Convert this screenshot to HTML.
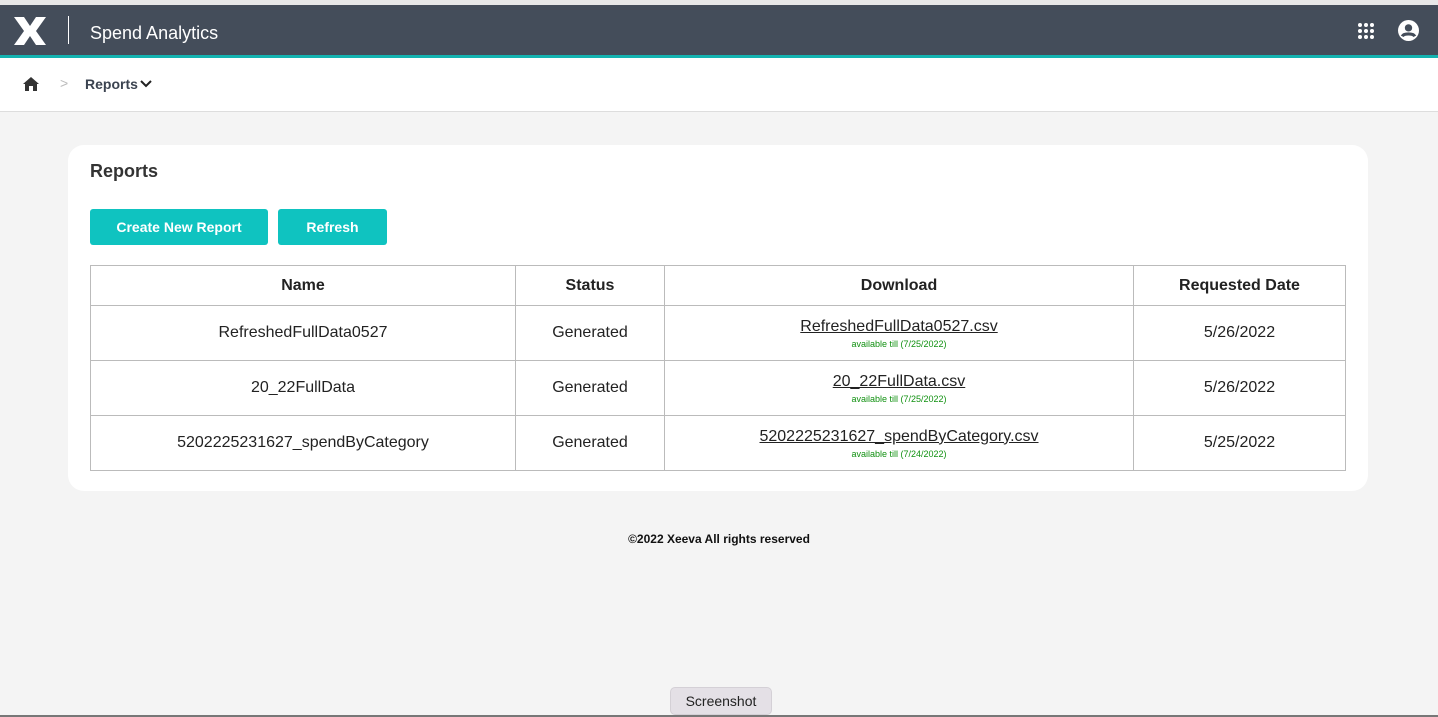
<!DOCTYPE html>
<html><head><style>
*{margin:0;padding:0;box-sizing:border-box}
body{width:1438px;height:717px;background:#f4f4f4;font-family:"Liberation Sans",Arial,sans-serif;position:relative;overflow:hidden}
.top{position:absolute;left:0;top:0;width:1438px;height:5px;background:#e8e8e8}
.hdr{position:absolute;left:0;top:5px;width:1438px;height:50px;background:#444d5a}
.teal{position:absolute;left:0;top:55px;width:1438px;height:3px;background:#14b3b0}
.bc{position:absolute;left:0;top:58px;width:1438px;height:54px;background:#fff;border-bottom:1px solid #ddd}
.card{position:absolute;left:68px;top:145px;width:1300px;height:346px;background:#fff;border-radius:16px}
.btn{position:absolute;top:209px;height:36px;background:#0fc3c0;color:#fff;font-weight:bold;font-size:14px;display:flex;align-items:center;justify-content:center;border-radius:3px}
table{position:absolute;left:90px;top:265px;width:1256px;border-collapse:collapse;font-size:16px;color:#222}
td,th{border:1px solid #bbb;text-align:center}
th{height:40px;font-weight:bold}
td{height:55px}
a{color:#222;text-decoration:underline}
.av{font-size:9px;color:#119111;margin-top:3px}
</style></head><body>
<div class="top"></div>
<div class="hdr">
<svg style="position:absolute;left:14px;top:12px" width="32" height="28" viewBox="0 0 32 28"><path d="M0 0h10l6 9 6-9h10l-10 14 10 14H22l-6-9-6 9H0l10-14z" fill="#fff"/></svg>
<div style="position:absolute;left:68px;top:11px;width:1px;height:28px;background:#fff"></div>
<div style="position:absolute;left:90px;top:18px;color:#fff;font-size:18px">Spend Analytics</div>
<svg style="position:absolute;left:1357px;top:17px" width="18" height="18" viewBox="0 0 18 18" fill="#fff"><circle cx="3" cy="3" r="2"/><circle cx="9" cy="3" r="2"/><circle cx="15" cy="3" r="2"/><circle cx="3" cy="9" r="2"/><circle cx="9" cy="9" r="2"/><circle cx="15" cy="9" r="2"/><circle cx="3" cy="15" r="2"/><circle cx="9" cy="15" r="2"/><circle cx="15" cy="15" r="2"/></svg>
<svg style="position:absolute;left:1398px;top:15px" width="21" height="21" viewBox="0 0 20 20"><circle cx="10" cy="10" r="10" fill="#fff"/><circle cx="10" cy="7.5" r="3.5" fill="#444d5a"/><path d="M4 15.5c1.5-3 10.5-3 12 0" stroke="#444d5a" stroke-width="3" fill="none"/></svg>
</div>
<div class="teal"></div>
<div class="bc">
<svg style="position:absolute;left:23px;top:19px" width="16" height="14" viewBox="0 0 16 14"><path d="M8 0L0 7h2v7h4V9h4v5h4V7h2z" fill="#333"/></svg>
<div style="position:absolute;left:60px;top:17px;color:#bbb;font-size:14px">&gt;</div>
<div style="position:absolute;left:85px;top:18px;color:#3b4350;font-size:14px;font-weight:bold">Reports</div>
<svg style="position:absolute;left:140px;top:22px" width="12" height="8" viewBox="0 0 12 8"><path d="M1 1l5 5 5-5" stroke="#222" stroke-width="2" fill="none"/></svg>
</div>
<div class="card"></div>
<div style="position:absolute;left:90px;top:161px;font-size:18px;font-weight:bold;color:#333">Reports</div>
<div class="btn" style="left:90px;width:178px">Create New Report</div>
<div class="btn" style="left:278px;width:109px">Refresh</div>
<table>
<tr><th style="width:425px">Name</th><th style="width:149px">Status</th><th style="width:469px">Download</th><th>Requested Date</th></tr>
<tr><td>RefreshedFullData0527</td><td>Generated</td><td><a>RefreshedFullData0527.csv</a><div class="av">available till (7/25/2022)</div></td><td>5/26/2022</td></tr>
<tr><td>20_22FullData</td><td>Generated</td><td><a>20_22FullData.csv</a><div class="av">available till (7/25/2022)</div></td><td>5/26/2022</td></tr>
<tr><td>5202225231627_spendByCategory</td><td>Generated</td><td><a>5202225231627_spendByCategory.csv</a><div class="av">available till (7/24/2022)</div></td><td>5/25/2022</td></tr>
</table>
<div style="position:absolute;left:0;width:1438px;top:532px;text-align:center;font-size:12px;font-weight:bold;color:#111">©2022 Xeeva All rights reserved</div>
<div style="position:absolute;left:670px;top:687px;width:102px;height:28px;background:#e4e0e6;border:1px solid #d4d0d6;border-radius:5px;font-size:14px;color:#222;display:flex;align-items:center;justify-content:center">Screenshot</div>
<div style="position:absolute;left:0;top:715px;width:1438px;height:2px;background:#777"></div>
</body></html>
